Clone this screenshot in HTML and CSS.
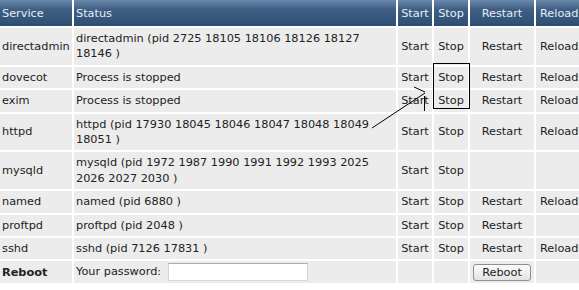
FILE: index.html
```html
<!DOCTYPE html>
<html lang="en">
<head>
    <meta charset="UTF-8">
    <title>Service Monitor</title>
    <link rel="stylesheet" href="styles.css">
</head>
<body>
    <table class="services">
        <colgroup>
            <col class="col-service">
            <col class="col-status">
            <col class="col-start">
            <col class="col-stop">
            <col class="col-restart">
            <col class="col-reload">
        </colgroup>
        <tr>
            <th>Service</th>
            <th>Status</th>
            <th class="act">Start</th>
            <th class="act">Stop</th>
            <th class="act">Restart</th>
            <th class="reload">Reload</th>
        </tr>
        <tr>
            <td>directadmin</td>
            <td class="status">directadmin (pid 2725 18105 18106 18126 18127 18146 )</td>
            <td class="act">Start</td><td class="act">Stop</td><td class="act">Restart</td><td class="reload">Reload</td>
        </tr>
        <tr>
            <td>dovecot</td>
            <td class="status">Process is stopped</td>
            <td class="act">Start</td><td class="act">Stop</td><td class="act">Restart</td><td class="reload">Reload</td>
        </tr>
        <tr>
            <td>exim</td>
            <td class="status">Process is stopped</td>
            <td class="act">Start</td><td class="act">Stop</td><td class="act">Restart</td><td class="reload">Reload</td>
        </tr>
        <tr>
            <td>httpd</td>
            <td class="status">httpd (pid 17930 18045 18046 18047 18048 18049 18051 )</td>
            <td class="act">Start</td><td class="act">Stop</td><td class="act">Restart</td><td class="reload">Reload</td>
        </tr>
        <tr>
            <td>mysqld</td>
            <td class="status">mysqld (pid 1972 1987 1990 1991 1992 1993 2025 2026 2027 2030 )</td>
            <td class="act">Start</td><td class="act">Stop</td><td class="act"></td><td class="reload"></td>
        </tr>
        <tr>
            <td>named</td>
            <td class="status">named (pid 6880 )</td>
            <td class="act">Start</td><td class="act">Stop</td><td class="act">Restart</td><td class="reload">Reload</td>
        </tr>
        <tr>
            <td>proftpd</td>
            <td class="status">proftpd (pid 2048 )</td>
            <td class="act">Start</td><td class="act">Stop</td><td class="act">Restart</td><td class="reload"></td>
        </tr>
        <tr>
            <td>sshd</td>
            <td class="status">sshd (pid 7126 17831 )</td>
            <td class="act">Start</td><td class="act">Stop</td><td class="act">Restart</td><td class="reload">Reload</td>
        </tr>
        <tr class="reboot-row">
            <td><b>Reboot</b></td>
            <td class="status">Your password: <input type="password" class="pass"></td>
            <td></td><td></td>
            <td class="act"><button class="reboot-btn">Reboot</button></td>
            <td></td>
        </tr>
    </table>

    <!-- hand-drawn annotation over the stopped services -->
    <svg class="marks" width="579" height="290" viewBox="0 0 579 290">
        <rect x="433.5" y="63.5" width="36" height="45" fill="none" stroke="#000" stroke-width="1"/>
        <line x1="372" y1="128" x2="425" y2="93" stroke="#000" stroke-width="1"/>
        <line x1="414" y1="87" x2="425" y2="92" stroke="#000" stroke-width="1"/>
        <line x1="424.5" y1="96" x2="424.5" y2="111" stroke="#000" stroke-width="1"/>
    </svg>
</body>
</html>
```

FILE: styles.css
```css
body {
    margin: 0;
    background-color: #fff;
    font-family: "DejaVu Sans", Verdana, sans-serif;
    font-size: 11.3px;
    color: #222;
    overflow: hidden;
    position: relative;
    width: 579px;
    height: 290px;
}
.services {
    border-collapse: separate;
    border-spacing: 2px;
    margin: -2px 0 0 -2px;
    table-layout: fixed;
    width: 590px;
}
.col-service { width: 72px; }
.col-status { width: 322px; }
.col-start { width: 34px; }
.col-stop { width: 34px; }
.col-restart { width: 64px; }
.col-reload { width: 50px; }
.services th {
    background: linear-gradient(to bottom, #6b89ab 0%, #3f5f85 35%, #2f4e74 100%);
    color: #e6edf5;
    font-weight: normal;
    text-align: left;
    height: 26px;
    padding: 0 2px;
    line-height: 15px;
    box-sizing: border-box;
}
.services td {
    background-color: #ececec;
    padding: 3px 2px 3px;
    line-height: 15.4px;
    vertical-align: middle;
}
.services td.status {
    padding-right: 8px;
}
.services .act {
    text-align: center;
    padding-left: 0;
    padding-right: 0;
}
.services .reload {
    text-align: left;
    padding-left: 4px;
    padding-right: 0;
}
.reboot-row td {
    padding-top: 2px;
    padding-bottom: 2px;
}
.pass {
    width: 140px;
    height: 18px;
    box-sizing: border-box;
    border: 1px solid #d6d6d6;
    border-top-color: #ababab;
    background: #fff;
    margin: 0 0 0 3px;
    padding: 0;
    vertical-align: middle;
}
.reboot-btn {
    font-family: "DejaVu Sans", Verdana, sans-serif;
    font-size: 11.3px;
    color: #222;
    width: 58px;
    height: 17px;
    padding: 0;
    border: 1px solid #8f8f8f;
    border-radius: 3px;
    background: linear-gradient(to bottom, #fbfbfb, #e3e3e3);
    vertical-align: middle;
}
.marks {
    position: absolute;
    top: 0;
    left: 0;
    pointer-events: none;
}
```
